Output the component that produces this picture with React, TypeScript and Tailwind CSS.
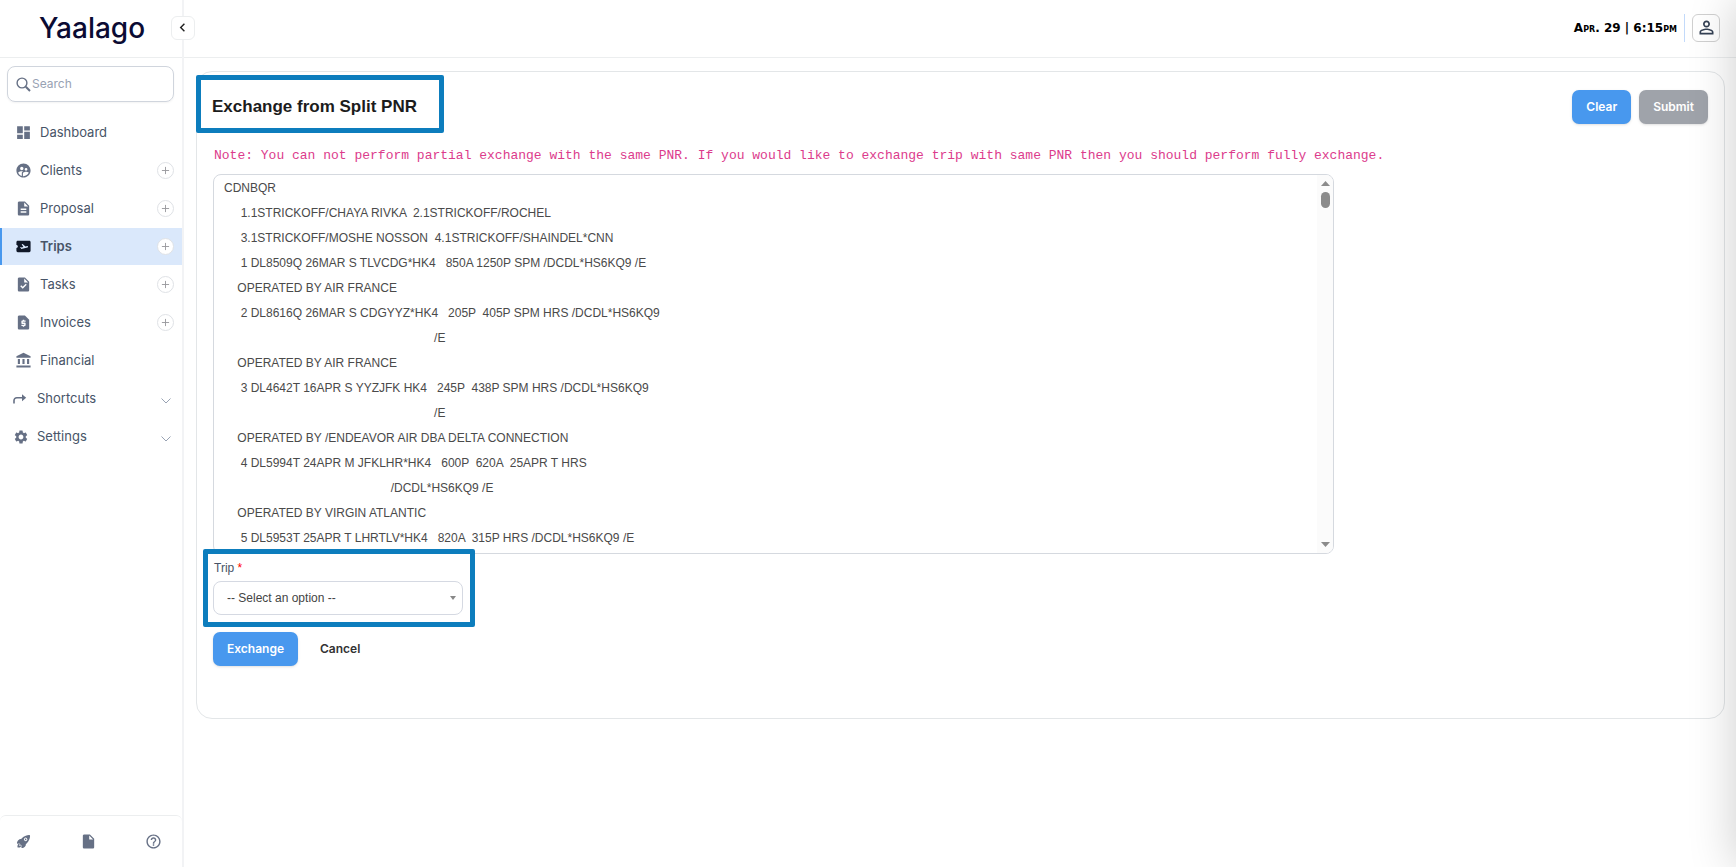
import { useState } from "react";
import type { ReactNode } from "react";
import type { IconType } from "react-icons";
import {
  MdAccountBalance,
  MdAirplaneTicket,
  MdChevronLeft,
  MdDashboard,
  MdDescription,
  MdHelpOutline,
  MdInsertDriveFile,
  MdPersonOutline,
  MdRequestPage,
  MdSettings,
  MdSupervisedUserCircle,
  MdTask,
} from "react-icons/md";
import { IoRocket } from "react-icons/io5";
import { Plus } from "lucide-react";

type NavItem = { label: string; icon: IconType; add?: boolean; active?: boolean };

const NAV: NavItem[] = [
  { label: "Dashboard", icon: MdDashboard },
  { label: "Clients", icon: MdSupervisedUserCircle, add: true },
  { label: "Proposal", icon: MdDescription, add: true },
  { label: "Trips", icon: MdAirplaneTicket, add: true, active: true },
  { label: "Tasks", icon: MdTask, add: true },
  { label: "Invoices", icon: MdRequestPage, add: true },
  { label: "Financial", icon: MdAccountBalance },
];

const sp = (n: number) => " ".repeat(n);

const PNR = [
  "CDNBQR",
  sp(4) + " 1.1STRICKOFF/CHAYA RIVKA  2.1STRICKOFF/ROCHEL",
  sp(4) + " 3.1STRICKOFF/MOSHE NOSSON  4.1STRICKOFF/SHAINDEL*CNN",
  sp(4) + " 1 DL8509Q 26MAR S TLVCDG*HK4   850A 1250P SPM /DCDL*HS6KQ9 /E",
  sp(4) + "OPERATED BY AIR FRANCE",
  sp(4) + " 2 DL8616Q 26MAR S CDGYYZ*HK4   205P  405P SPM HRS /DCDL*HS6KQ9",
  sp(63) + "/E",
  sp(4) + "OPERATED BY AIR FRANCE",
  sp(4) + " 3 DL4642T 16APR S YYZJFK HK4   245P  438P SPM HRS /DCDL*HS6KQ9",
  sp(63) + "/E",
  sp(4) + "OPERATED BY /ENDEAVOR AIR DBA DELTA CONNECTION",
  sp(4) + " 4 DL5994T 24APR M JFKLHR*HK4   600P  620A  25APR T HRS",
  sp(50) + "/DCDL*HS6KQ9 /E",
  sp(4) + "OPERATED BY VIRGIN ATLANTIC",
  sp(4) + " 5 DL5953T 25APR T LHRTLV*HK4   820A  315P HRS /DCDL*HS6KQ9 /E",
].join("\n");

function SearchIcon() {
  return (
    <svg width="15" height="15" viewBox="0 0 15 15" fill="none" stroke="#667085" className="shrink-0">
      <circle cx="6" cy="6" r="4.900" strokeWidth="1.400" />
      <path d="m9.800 9.800 4.200 4.200" strokeWidth="2" />
    </svg>
  );
}

function ShortcutIcon() {
  return (
    <svg width="14" height="14" viewBox="0 0 14 14" fill="none" stroke="#667085" strokeWidth="1.600">
      <path d="M1 11.500V8.500a2.800 2.800 0 0 1 2.800-2.800H11" />
      <path d="M9 2.200 13.200 5.700 9 9.200Z" fill="#667085" stroke="none" />
    </svg>
  );
}

function NavGroup({ label, icon }: { label: string; icon: ReactNode }) {
  return (
    <button className="flex h-[38px] w-full items-center pr-[11px] pl-[13px] text-[13px] text-[#475467]">
      <span className="flex w-6 items-center">{icon}</span>
      <span className="flex-1 text-left">{label}</span>
      <svg width="10" height="6" viewBox="0 0 10 6" fill="none" stroke="#98a2b3" className="mt-1">
        <path d="m.5.5 4.500 4.500 4.500-4.500" />
      </svg>
    </button>
  );
}

function Sidebar() {
  return (
    <aside className="flex w-[184px] shrink-0 flex-col border-r-2 border-[#f2f3f5] font-['Inter',sans-serif]">
      <div className="flex h-[58px] items-center justify-center border-b border-[#eceeef] pb-px pl-[2px] text-[28px] font-medium text-[#0b0b33]">
        Yaalago
      </div>

      <label className="mt-2 mr-2 ml-[7px] flex h-9 items-center gap-px rounded-lg border border-[#d0d5dd] pl-2 shadow-xs">
        <SearchIcon />
        <input
          type="search"
          aria-label="Search"
          placeholder="Search"
          className="w-full min-w-0 bg-transparent text-[12px] outline-none placeholder:text-[#98a2b3]"
        />
      </label>

      <nav className="mt-3 flex-1">
        {NAV.map(({ label, icon: Icon, add, active }) => (
          <div
            key={label}
            className={
              active
                ? "mb-px flex h-[37px] items-center border-l-2 border-[#4898ee] bg-[#dae8fb] pr-2"
                : "mb-px flex h-[37px] items-center border-l-2 border-transparent pr-2"
            }
          >
            <a
              href="#"
              className={
                active
                  ? "flex flex-1 items-center gap-2 pl-[13px] text-[13px] font-semibold text-[#475467]"
                  : "flex flex-1 items-center gap-2 pl-[13px] text-[13px] text-[#475467]"
              }
            >
              <Icon size={17} color={active ? "#101828" : "#667085"} />
              {label}
            </a>
            {add && (
              <button
                aria-label={`Add ${label}`}
                className="grid size-[17px] place-items-center rounded-full border border-[#dfe2e6] bg-white"
              >
                <Plus size={11} color="#98989c" />
              </button>
            )}
          </div>
        ))}
        <NavGroup label="Shortcuts" icon={<ShortcutIcon />} />
        <NavGroup label="Settings" icon={<MdSettings size={16} color="#667085" />} />
      </nav>

      <div className="flex h-[52px] items-center justify-between rounded-t-md border-t border-[#eceeef] pr-5 pl-4 text-[#667085]">
        <button aria-label="What's new"><IoRocket size={15} /></button>
        <button aria-label="Documents"><MdInsertDriveFile size={17} /></button>
        <button aria-label="Help"><MdHelpOutline size={17} /></button>
      </div>
    </aside>
  );
}

function TopBar() {
  return (
    <header className="flex h-[58px] items-center justify-between border-b border-[#eceeef] pr-4 pb-px">
      <button
        aria-label="Collapse menu"
        className="relative z-10 -mt-px -ml-[13px] grid size-6 place-items-center rounded-md border border-[#eceeef] bg-white pr-px"
      >
        <MdChevronLeft size={17} color="#222" />
      </button>
      <div className="flex items-center">
        <span className="font-['DejaVu_Sans',sans-serif] text-[12px] font-bold text-black [font-variant:small-caps]">
          Apr. 29 | 6:15pm
        </span>
        <span className="mx-[7px] h-7 w-px bg-[#c3dafa]" />
        <button aria-label="Account" className="grid size-7 place-items-center rounded-md border border-[#d0d0d0] pb-[2px]">
          <MdPersonOutline size={21} color="#344054" />
        </button>
      </div>
    </header>
  );
}

export default function App() {
  const [pnr, setPnr] = useState(PNR);

  return (
    <div className="relative flex min-h-screen overflow-hidden bg-white font-['Liberation_Sans',Arial,sans-serif]">
      <Sidebar />
      <div className="min-w-0 flex-1">
        <TopBar />
        <main className="relative mt-[13px] mr-[11px] ml-3 rounded-2xl border border-[#e3e6e8] px-4 pb-[52px]">
          <div className="flex h-[70px] items-center justify-between">
            <h1 className="-ml-px text-[17px] font-bold text-[#1c1c1c]">Exchange from Split PNR</h1>
            <div className="flex gap-2 font-['Inter',sans-serif] text-[12px] font-semibold text-white">
              <button className="h-[34px] rounded-[7px] bg-[#4898ee] px-[14px] shadow-sm">Clear</button>
              <button className="h-[34px] rounded-[7px] bg-[#9fa3aa] px-[14px] shadow-sm">Submit</button>
            </div>
          </div>
          <div className="pointer-events-none absolute top-[3px] -left-px h-[58px] w-[248px] rounded-xs border-5 border-[#0d7dbd]" />

          <p className="mt-[5px] pl-px font-['Liberation_Mono',monospace] text-[13px] leading-[18px] text-[#dc3b8c]">
            Note: You can not perform partial exchange with the same PNR. If you would like to exchange trip with same
            PNR then you should perform fully exchange.
          </p>

          <div className="mt-[9px] flex h-[380px] w-3/4 overflow-hidden rounded-lg border border-[#d5d9df]">
            <textarea
              aria-label="PNR"
              spellCheck={false}
              value={pnr}
              onChange={(e) => setPnr(e.target.value)}
              className="flex-1 resize-none overflow-hidden pt-px pl-[10px] text-[12px] leading-[25px] whitespace-pre text-[#4a4a4a] outline-none"
            />
            <div className="flex w-4 flex-col items-center bg-[#fbfbfb] py-[6px]">
              <svg width="9" height="5" viewBox="0 0 9 5" fill="#8b8b8b"><path d="M4.500 0 9 5H0Z" /></svg>
              <div className="mt-[6px] h-4 w-[9px] rounded-full bg-[#8b8b8b]" />
              <svg width="9" height="5" viewBox="0 0 9 5" fill="#8b8b8b" className="mt-auto"><path d="M0 0h9L4.500 5Z" /></svg>
            </div>
          </div>

          <div className="relative mt-[5px] w-[250px]">
            <label htmlFor="trip" className="block pl-px text-[12px] leading-[18px] text-[#475467]">
              Trip <span className="text-[#f00]">*</span>
            </label>
            <div className="relative mt-1">
              <select
                id="trip"
                className="h-[34px] w-full appearance-none rounded-lg border border-[#d5d9e2] bg-white pl-[13px] text-[12px] text-[#444] outline-none"
              >
                <option>-- Select an option --</option>
              </select>
              <svg width="6" height="4" viewBox="0 0 6 4" fill="#888" className="pointer-events-none absolute top-[15px] right-[7px]">
                <path d="M0 0h6L3 4Z" />
              </svg>
            </div>
            <div className="pointer-events-none absolute -top-[10px] -left-[10px] h-[78px] w-[272px] rounded-xs border-5 border-[#0d7dbd]" />
          </div>

          <div className="mt-[17px] flex font-['Inter',sans-serif] text-[12px] font-semibold">
            <button className="h-[34px] rounded-[7px] bg-[#4898ee] px-[14px] text-white shadow-sm">Exchange</button>
            <button className="ml-2 h-[34px] px-[14px] text-[#333]">Cancel</button>
          </div>
        </main>
      </div>

      {/* shadow of the closed right-hand drawer */}
      <div className="pointer-events-none absolute inset-y-0 left-full w-80 shadow-[0_0_45px_rgba(0,0,0,0.2)]" />
    </div>
  );
}
